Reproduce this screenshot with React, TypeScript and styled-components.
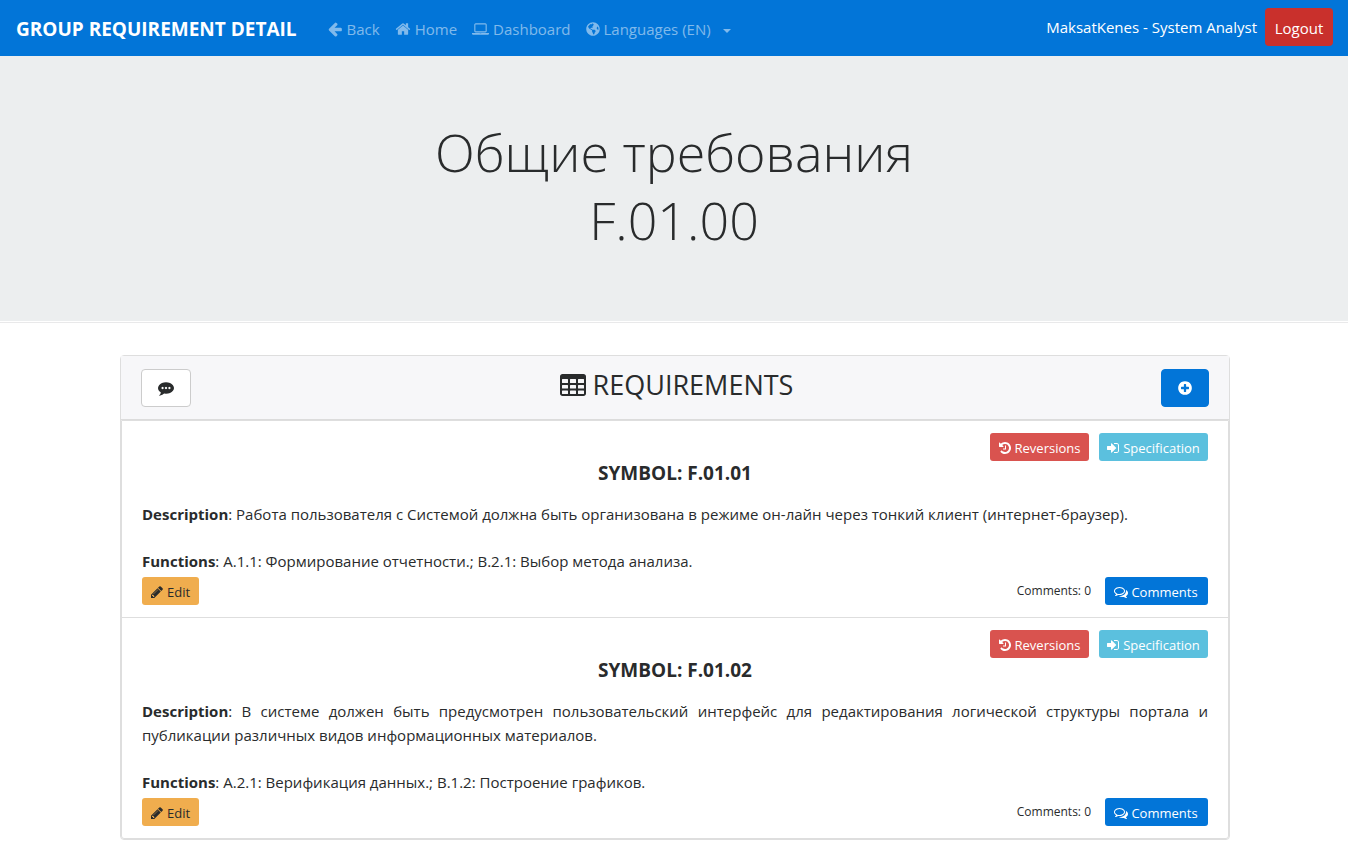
import React from "react";
import styled, { createGlobalStyle, css } from "styled-components";
import { FaGlobeAmericas } from "react-icons/fa";

const GlobalStyle = createGlobalStyle`
  *, *::before, *::after { box-sizing: border-box; }
  body {
    margin: 0;
    background: #fff;
    color: #292b2c;
    font-family: "Open Sans", "Noto Sans", sans-serif;
    font-size: 15px;
    line-height: 24px;
  }
  button { font-family: inherit; cursor: pointer; }
`;

const Svg = styled.svg`
  display: block;
  flex: none;
  fill: currentColor;
`;

const ICONS = {
  arrowLeft:
    "M1664 896v128q0 53-32.5 90.5t-84.5 37.5h-704l293 294q38 36 38 90t-38 90l-75 76q-37 37-90 37-52 0-91-37l-651-652q-37-37-37-90 0-52 37-91l651-650q38-38 91-38 52 0 90 38l75 74q38 38 38 91t-38 91l-293 293h704q52 0 84.5 37.5t32.5 90.5z",
  home: "M1472 992v480q0 26-19 45t-45 19h-384v-384h-256v384h-384q-26 0-45-19t-19-45v-480q0-1 .5-3t.5-3l575-474 575 474q1 2 1 6zm223-69l-62 74q-8 9-21 11h-3q-13 0-21-7l-692-577-692 577q-12 8-24 7-13-2-21-11l-62-74q-8-10-7-23.5t11-21.5l719-599q32-26 76-26t76 26l244 204v-195q0-14 9-23t23-9h192q14 0 23 9t9 23v408l219 182q10 8 11 21.5t-7 23.5z",
  laptop:
    "M416 1280q-66 0-113-47t-47-113v-704q0-66 47-113t113-47h1088q66 0 113 47t47 113v704q0 66-47 113t-113 47h-1088zm-32-864v704q0 13 9.5 22.5t22.5 9.5h1088q13 0 22.5-9.5t9.5-22.5v-704q0-13-9.5-22.5t-22.5-9.5h-1088q-13 0-22.5 9.5t-9.5 22.5zm1376 928h160v96q0 40-47 68t-113 28h-1600q-66 0-113-28t-47-68v-96h1760zm-720 96q16 0 16-16t-16-16h-160q-16 0-16 16t16 16h160z",
  commenting:
    "M640 896q0-53-37.5-90.5t-90.5-37.5-90.5 37.5-37.5 90.5 37.5 90.5 90.5 37.5 90.5-37.5 37.5-90.5zm384 0q0-53-37.5-90.5t-90.5-37.5-90.5 37.5-37.5 90.5 37.5 90.5 90.5 37.5 90.5-37.5 37.5-90.5zm384 0q0-53-37.5-90.5t-90.5-37.5-90.5 37.5-37.5 90.5 37.5 90.5 90.5 37.5 90.5-37.5 37.5-90.5zm384 0q0 174-120 321.5t-326 233-450 85.5q-110 0-211-18-173 173-435 229-52 10-86 13-12 1-22-6t-13-18q-4-15 20-37 5-5 23.5-21.5t25.5-23.5 23.5-25.5 24-31.5 20.5-37 20-48 14.5-57.5 12.5-72.5q-146-90-229.5-216.5t-83.5-269.5q0-174 120-321.5t326-233 450-85.5 450 85.5 326 233 120 321.5z",
  table:
    "M224 192h1344q66 0 113 47t47 113v1088q0 66-47 113t-113 47h-1344q-66 0-113-47t-47-113v-1088q0-66 47-113t113-47zm0 320q-32 0-32 32v192q0 32 32 32h320q32 0 32-32v-192q0-32-32-32zm512 0q-32 0-32 32v192q0 32 32 32h320q32 0 32-32v-192q0-32-32-32zm512 0q-32 0-32 32v192q0 32 32 32h320q32 0 32-32v-192q0-32-32-32zM224 896q-32 0-32 32v160q0 32 32 32h320q32 0 32-32v-160q0-32-32-32zm512 0q-32 0-32 32v160q0 32 32 32h320q32 0 32-32v-160q0-32-32-32zm512 0q-32 0-32 32v160q0 32 32 32h320q32 0 32-32v-160q0-32-32-32zM224 1248q-32 0-32 32v160q0 32 32 32h320q32 0 32-32v-160q0-32-32-32zm512 0q-32 0-32 32v160q0 32 32 32h320q32 0 32-32v-160q0-32-32-32zm512 0q-32 0-32 32v160q0 32 32 32h320q32 0 32-32v-160q0-32-32-32z",
  plusCircle:
    "M1344 960v-128q0-26-19-45t-45-19h-256v-256q0-26-19-45t-45-19h-128q-26 0-45 19t-19 45v256h-256q-26 0-45 19t-19 45v128q0 26 19 45t45 19h256v256q0 26 19 45t45 19h128q26 0 45-19t19-45v-256h256q26 0 45-19t19-45zm320-64q0 209-103 385.5t-279.5 279.5-385.5 103-385.5-103-279.5-279.5-103-385.5 103-385.5 279.5-279.5 385.5-103 385.5 103 279.5 279.5 103 385.5z",
  history:
    "M1664 896q0 156-61 298t-164 245-245 164-298 61q-172 0-327-72.5t-264-204.5q-7-10-6.5-22.5t8.5-20.5l137-138q10-9 25-9 16 2 23 12 73 95 179 147t225 52q104 0 198.5-40.5t163.5-109.5 109.5-163.5 40.5-198.5-40.5-198.5-109.5-163.5-163.5-109.5-198.5-40.5q-98 0-188 35.5t-160 101.5l137 138q31 30 14 69-17 40-59 40h-448q-26 0-45-19t-19-45v-448q0-42 40-59 39-17 69 14l130 129q107-101 244.5-156.5t284.5-55.5q156 0 298 61t245 164 164 245 61 298zm-640-288v448q0 14-9 23t-23 9h-320q-14 0-23-9t-9-23v-64q0-14 9-23t23-9h224v-352q0-14 9-23t23-9h64q14 0 23 9t9 23z",
  signIn:
    "M1312 896q0 26-19 45l-544 544q-19 19-45 19t-45-19-19-45v-288h-448q-26 0-45-19t-19-45v-384q0-26 19-45t45-19h448v-288q0-26 19-45t45-19 45 19l544 544q19 19 19 45zm352-352v704q0 119-84.5 203.5t-203.5 84.5h-320q-13 0-22.5-9.5t-9.5-22.5q0-4-1-20t-.5-26.5 3-23.5 10-19.5 20.5-6.5h320q66 0 113-47t47-113v-704q0-66-47-113t-113-47h-312l-11.5-1-11.5-3-8-5.5-7-9-2-13.5q0-4-1-20t-.5-26.5 3-23.5 10-19.5 20.5-6.5h320q119 0 203.5 84.5t84.5 203.5z",
  pencil:
    "M491 1536l91-91-235-235-91 91v107h128v128h107zm523-928q0-22-22-22-10 0-17 7l-542 542q-7 7-7 17 0 22 22 22 10 0 17-7l542-542q7-7 7-17zm-54-192l416 416-832 832h-416v-416zm683 96q0 53-37 90l-166 166-416-416 166-165q36-38 90-38 53 0 91 38l235 234q37 39 37 91z",
  comments:
    "M704 384q-153 0-286 52t-211.5 141-78.5 191q0 82 53 158t149 132l97 56-35 84q34-20 62-39l44-31 53 10q78 14 153 14 153 0 286-52t211.5-141 78.5-191-78.5-191-211.5-141-286-52zm0-128q191 0 353.5 68.5t256.5 186.5 94 257-94 257-256.5 186.5-353.5 68.5q-86 0-176-16-124 88-278 128-36 9-86 16h-3q-11 0-20.5-8t-11.5-21q-1-3-1-6.5t.5-6.5 2-6l2.5-5 3.5-5.5 4-5 4.5-5 4-4.5q5-6 23-25t26-29.5 22.5-29 25-38.5 20.5-44q-124-72-195-177t-71-224q0-139 94-257t256.5-186.5 353.5-68.5zm822 1169q10 24 20.5 44t25 38.5 22.5 29 26 29.5 23 25q1 1 4 4.5t4.5 5 4 5 3.5 5.5l2.5 5 2 6 .5 6.5-1 6.5q-3 14-13 22t-22 7q-50-7-86-16-154-40-278-128-90 16-176 16-271 0-472-132 58 4 88 4 161 0 309-45t264-129q125-92 192-212t67-254q0-77-23-152 129 71 204 178t75 230q0 120-71 224.5t-195 176.5z",
};

type IconName = keyof typeof ICONS;

function Icon({ name, size = 16, wide = false }: { name: IconName; size?: number; wide?: boolean }) {
  const w = wide ? 1920 : 1792;
  return (
    <Svg width={wide ? size + 1 : size} height={size} viewBox={`0 0 ${w} 1792`} fillRule="evenodd" aria-hidden="true">
      <path d={ICONS[name]} />
    </Svg>
  );
}

const Navbar = styled.nav`
  display: flex;
  align-items: flex-start;
  min-height: 56px;
  padding: 8px 15px 8px 16px;
  background: #0275d8;
  color: #fff;
`;

const Brand = styled.a`
  margin-right: 30px;
  padding-top: 6px;
  color: #fff;
  font-size: 19px;
  font-weight: 700;
  line-height: 30px;
  text-decoration: none;
  white-space: nowrap;
`;

const NavList = styled.ul`
  display: flex;
  gap: 15px;
  margin: 0;
  padding: 9px 0 0;
  list-style: none;
`;

const navItem = css`
  display: flex;
  align-items: center;
  gap: 4px;
  padding: 0;
  border: 0;
  background: none;
  color: rgba(255, 255, 255, 0.5);
  font-size: 15px;
  line-height: 24px;
  text-decoration: none;
  white-space: nowrap;
`;

const NavLink = styled.a`
  ${navItem}
`;

const NavToggle = styled.button`
  ${navItem}
`;

const Caret = styled.span`
  margin: 3px 0 0 8px;
  border: 4px solid transparent;
  border-top-color: currentColor;
  border-bottom: 0;
`;

const Account = styled.div`
  display: flex;
  gap: 8px;
  margin-left: auto;
  white-space: nowrap;
`;

const UserName = styled.span`
  padding-top: 7px;
`;

const LogoutButton = styled.button`
  min-width: 68px;
  height: 38px;
  padding: 2px 8px 0;
  border: 0;
  border-radius: 4px;
  background: #c9302c;
  color: #fff;
  font-size: 15px;
`;

const Hero = styled.header`
  padding: 62px 16px 67px;
  background: #eceeef;
  text-align: center;
`;

const HeroTitle = styled.h1`
  margin: 0;
  font-size: 52px;
  font-weight: 300;
  line-height: 68px;
`;

const Rule = styled.hr`
  height: 1px;
  margin: 1px 0 32px;
  border: 0;
  background: #e9e9ea;
`;

const Container = styled.main`
  max-width: 1140px;
  margin: 0 auto;
  padding: 0 14px 12px 16px;
`;

const Card = styled.section`
  border: 1px solid #dedede;
  border-radius: 4px;
`;

const CardHeader = styled.div`
  display: flex;
  align-items: center;
  justify-content: space-between;
  padding: 13px 20px 12px;
  background: #f7f7f9;
  border-bottom: 1px solid #dcdcdc;
`;

const CardTitle = styled.h2`
  display: flex;
  align-items: center;
  gap: 6px;
  margin: 0;
  padding-bottom: 6px;
  font-size: 27px;
  font-weight: 400;
  line-height: 32px;
`;

const HeaderButton = styled.button<{ $primary?: boolean }>`
  display: flex;
  align-items: center;
  justify-content: center;
  width: ${(p) => (p.$primary ? 48 : 50)}px;
  height: 38px;
  padding: 0 0 1px;
  border: 1px solid ${(p) => (p.$primary ? "#0275d8" : "#ccc")};
  border-radius: 4px;
  background: ${(p) => (p.$primary ? "#0275d8" : "#fff")};
  color: ${(p) => (p.$primary ? "#fff" : "#292b2c")};
`;

const List = styled.ul`
  margin: 0;
  padding: 0;
  border: 1px solid #dedede;
  border-radius: 0 0 3px 3px;
  list-style: none;
`;

const Item = styled.li`
  padding: 12px 20px;

  & + & {
    border-top: 1px solid #dedede;
  }
`;

const Actions = styled.div`
  display: flex;
  justify-content: flex-end;
  gap: 10px;
`;

const tones = {
  danger: ["#d9534f", "#fff"],
  info: ["#5bc0de", "#fff"],
  warning: ["#f0ad4e", "#292b2c"],
  primary: ["#0275d8", "#fff"],
};

const SmallButton = styled.button<{ $tone: keyof typeof tones; $width: number }>`
  display: flex;
  align-items: center;
  justify-content: center;
  gap: 3px;
  min-width: ${(p) => p.$width}px;
  height: 28px;
  padding: 2px 1px 0 0;
  border: 0;
  border-radius: 3px;
  background: ${(p) => tones[p.$tone][0]};
  color: ${(p) => tones[p.$tone][1]};
  font-size: 13px;
  line-height: 20px;
  white-space: nowrap;
`;

const Symbol = styled.h3`
  margin: 0 0 17px;
  font-size: 19px;
  font-weight: 700;
  line-height: 24px;
  text-align: center;
`;

const Text = styled.p`
  margin: 0 0 23px;
  text-align: justify;

  & + & {
    margin-bottom: 4px;
  }
`;

const Footer = styled.div`
  display: flex;
  align-items: center;
  justify-content: space-between;
`;

const CommentGroup = styled.div`
  display: flex;
  align-items: center;
  gap: 14px;
  font-size: 12px;
`;

const requirements = [
  {
    symbol: "F.01.01",
    description:
      "Работа пользователя с Системой должна быть организована в режиме он-лайн через тонкий клиент (интернет-браузер).",
    functions: "A.1.1: Формирование отчетности.; B.2.1: Выбор метода анализа.",
    comments: 0,
  },
  {
    symbol: "F.01.02",
    description:
      "В системе должен быть предусмотрен пользовательский интерфейс для редактирования логической структуры портала и публикации различных видов информационных материалов.",
    functions: "A.2.1: Верификация данных.; B.1.2: Построение графиков.",
    comments: 0,
  },
];

export default function App() {
  return (
    <>
      <GlobalStyle />
      <Navbar>
        <Brand href="#">GROUP REQUIREMENT DETAIL</Brand>
        <NavList>
          <li>
            <NavLink href="#back"><Icon name="arrowLeft" />Back</NavLink>
          </li>
          <li>
            <NavLink href="#home"><Icon name="home" />Home</NavLink>
          </li>
          <li>
            <NavLink href="#dashboard"><Icon name="laptop" wide />Dashboard</NavLink>
          </li>
          <li>
            <NavToggle type="button" aria-haspopup="true">
              <FaGlobeAmericas size={14} aria-hidden="true" />
              Languages (EN)
              <Caret />
            </NavToggle>
          </li>
        </NavList>
        <Account>
          <UserName>MaksatKenes - System Analyst</UserName>
          <LogoutButton type="button">Logout</LogoutButton>
        </Account>
      </Navbar>
      <Hero>
        <HeroTitle>
          Общие требования
          <br />
          F.01.00
        </HeroTitle>
      </Hero>
      <Rule />
      <Container>
        <Card>
          <CardHeader>
            <HeaderButton type="button" aria-label="Comments">
              <Icon name="commenting" />
            </HeaderButton>
            <CardTitle>
              <Icon name="table" size={28} />
              REQUIREMENTS
            </CardTitle>
            <HeaderButton type="button" $primary aria-label="Add requirement">
              <Icon name="plusCircle" />
            </HeaderButton>
          </CardHeader>
          <List>
            {requirements.map((r) => (
              <Item key={r.symbol}>
                <Actions>
                  <SmallButton type="button" $tone="danger" $width={99}>
                    <Icon name="history" size={14} />
                    Reversions
                  </SmallButton>
                  <SmallButton type="button" $tone="info" $width={109}>
                    <Icon name="signIn" size={14} />
                    Specification
                  </SmallButton>
                </Actions>
                <Symbol>SYMBOL: {r.symbol}</Symbol>
                <Text><b>Description</b>: {r.description}</Text>
                <Text><b>Functions</b>: {r.functions}</Text>
                <Footer>
                  <SmallButton type="button" $tone="warning" $width={57}>
                    <Icon name="pencil" size={14} />
                    Edit
                  </SmallButton>
                  <CommentGroup>
                    <span>Comments: {r.comments}</span>
                    <SmallButton type="button" $tone="primary" $width={103}>
                      <Icon name="comments" size={14} />
                      Comments
                    </SmallButton>
                  </CommentGroup>
                </Footer>
              </Item>
            ))}
          </List>
        </Card>
      </Container>
    </>
  );
}
